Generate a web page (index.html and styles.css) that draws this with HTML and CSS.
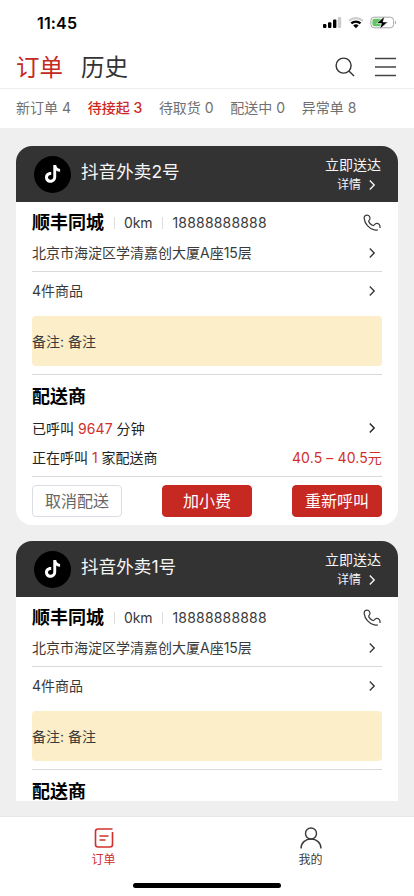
FILE: index.html
```html
<!DOCTYPE html>
<html lang="zh-CN">
<head>
<meta charset="utf-8">
<meta name="viewport" content="width=device-width, initial-scale=1">
<title>订单</title>
<link rel="stylesheet" href="styles.css">
</head>
<body>
<svg class="defs" aria-hidden="true">
  <symbol id="chevron" viewBox="0 0 8 12"><path d="M1.8 1.6 6.2 6 1.8 10.4" fill="none" stroke="currentColor" stroke-width="1.4"/></symbol>
  <symbol id="phone" viewBox="0 0 18 18"><path d="M1.2 4.6C1 2.2 2.3 1 4.2 1c1.9 0 2.9 2.1 2.8 3.8C6.900 6 5.600 6.200 5.700 7.200c.2 1.400 2.400 4 4.400 4.300 1.400.2 1.500-1.900 3.500-2.100 2.100-.1 3.500 1.400 3.400 3.400v1.300M1.200 4.600c.6 4.900 4.600 10.200 10.100 11.300 1 .2 2.300.2 3.500-.1" fill="none" stroke="currentColor" stroke-width="1.25"/></symbol>
  <symbol id="note" viewBox="0 0 24 24"><path fill="#fff" d="M12.300 3h2.900c.2 2.200 1.600 3.700 3.900 3.900v2.900c-1.500 0-2.800-.4-3.900-1.200v6.200c0 3.600-2.500 6-5.700 6S4 18.300 4 15.400c0-3.300 2.600-5.700 6.200-5.400v3c-1.900-.4-3.200.7-3.200 2.300 0 1.500 1.100 2.500 2.600 2.500 1.700 0 2.700-1.100 2.700-3z"/></symbol>
</svg>
<div class="status">
  <span class="time">11:45</span>
  <svg class="signals" viewBox="0 0 76 14">
    <g><rect x="1" y="8" width="3.400" height="4" rx="1"/><rect x="6" y="6.300" width="3.400" height="5.700" rx="1"/><rect x="11" y="3.500" width="3.400" height="8.500" rx="1"/><rect x="15.800" y="1" width="3.400" height="11" rx="1" fill="#ccc"/></g>
    <path d="M27 4.700a10.300 10.300 0 0 1 13.800 0" fill="none" stroke="#ccc" stroke-width="2.200"/>
    <path d="M29.300 7.400a6.700 6.700 0 0 1 9.200 0" fill="none" stroke="#000" stroke-width="2.200"/>
    <path d="M31.200 9.500a4 4 0 0 1 5.400 0L33.900 12.200z"/>
    <rect x="48.900" y="1.200" width="22.700" height="10.600" rx="3.300" fill="#fff" stroke="#a6a6a6"/>
    <path d="M52.400 2.700h6.300v7.600h-6.300a2 2 0 0 1-2-2V4.700a2 2 0 0 1 2-2z" fill="#62c466"/>
    <path d="M73 4.700v3.600c1.400-.5 1.400-3.100 0-3.600z" fill="#a6a6a6"/>
    <path d="M62.800 0 54.600 7.500h4.800L57.700 13.300 65.800 5.900H61z" stroke="#fff" stroke-width=".6"/>
  </svg>
</div>
<header class="top">
  <h1 class="top-tab active">订单</h1><h2 class="top-tab">历史</h2>
  <svg class="search" viewBox="0 0 20 20"><circle cx="8.600" cy="8.600" r="7.500"/><path d="m13.900 13.900 5.100 5"/></svg>
  <svg class="menu" viewBox="0 0 21 20"><path d="M0 1.500h21M0 10h21M0 18.500h21"/></svg>
</header>
<nav class="filters">
  <span>新订单 4</span><span class="active">待接起 3</span><span>待取货 0</span><span>配送中 0</span><span>异常单 8</span>
</nav>
<main class="list">
  <article class="card">
    <div class="card-head">
      <div class="logo"><svg><use href="#note"/></svg></div>
      <div class="store">抖音外卖2号</div>
      <div class="deliver"><span>立即送达</span><span class="detail">详情<svg class="chev"><use href="#chevron"/></svg></span></div>
    </div>
    <div class="card-body">
      <div class="row contact"><strong>顺丰同城</strong><i class="sep"></i><span class="km">0km</span><i class="sep"></i><span class="tel">18888888888</span><svg class="phone"><use href="#phone"/></svg></div>
      <div class="row address"><span>北京市海淀区学清嘉创大厦A座15层</span><svg class="chev"><use href="#chevron"/></svg></div>
      <div class="row goods"><span>4件商品</span><svg class="chev"><use href="#chevron"/></svg></div>
      <div class="remark">备注: 备注</div>
      <h3 class="section">配送商</h3>
      <div class="row called"><span>已呼叫 <em>9647</em> 分钟</span><svg class="chev"><use href="#chevron"/></svg></div>
      <div class="row calling"><span>正在呼叫 <em>1</em> 家配送商</span><em class="price">40.5 – 40.5元</em></div>
      <div class="actions"><button class="btn plain">取消配送</button><button class="btn">加小费</button><button class="btn">重新呼叫</button></div>
    </div>
  </article>
  <article class="card">
    <div class="card-head">
      <div class="logo"><svg><use href="#note"/></svg></div>
      <div class="store">抖音外卖1号</div>
      <div class="deliver"><span>立即送达</span><span class="detail">详情<svg class="chev"><use href="#chevron"/></svg></span></div>
    </div>
    <div class="card-body">
      <div class="row contact"><strong>顺丰同城</strong><i class="sep"></i><span class="km">0km</span><i class="sep"></i><span class="tel">18888888888</span><svg class="phone"><use href="#phone"/></svg></div>
      <div class="row address"><span>北京市海淀区学清嘉创大厦A座15层</span><svg class="chev"><use href="#chevron"/></svg></div>
      <div class="row goods"><span>4件商品</span><svg class="chev"><use href="#chevron"/></svg></div>
      <div class="remark">备注: 备注</div>
      <h3 class="section">配送商</h3>
    </div>
  </article>
</main>
<footer class="tabbar">
  <div class="tabs">
    <div class="tab active"><svg viewBox="0 0 22 22"><path d="M19.500 2H5Q2.500 2 2.500 4.500v13Q2.500 20 5 20h12q2.500 0 2.500-2.500V5M6.500 9h9M6.500 13h6" fill="none" stroke="currentColor" stroke-width="1.600"/></svg><span>订单</span></div>
    <div class="tab"><svg viewBox="0 0 22 22"><circle cx="11" cy="6.500" r="5.500" fill="none" stroke="currentColor" stroke-width="1.400"/><path d="M1 21.500C1 15.800 5.500 12 11 12s10 3.800 10 9.500" fill="none" stroke="currentColor" stroke-width="1.400"/></svg><span>我的</span></div>
  </div>
  <div class="home"></div>
</footer>
</body>
</html>
```
FILE: styles.css
```css
* { box-sizing: border-box; }
body {
  margin: 0; height: 896px; overflow: hidden;
  display: flex; flex-direction: column;
  background: #efefef; color: #3a3a3a;
  font: 14px/20px Inter, "Noto Sans CJK SC", sans-serif;
}
h1, h2, h3 { margin: 0; }
em { font-style: normal; color: #d0302c; }
svg { display: block; flex: none; }
.defs { position: absolute; width: 0; height: 0; }

.status { height: 47px; flex: none; background: #fff; display: flex; align-items: center; padding: 0 16px 1px 37px; }
.time { font-weight: 600; font-size: 16px; letter-spacing: .15px; color: #000; }
.signals { width: 76px; height: 14px; margin-left: auto; }

.top { height: 42px; flex: none; background: #fff; display: flex; align-items: center; padding: 0 18px 3px 16px; border-bottom: 1px solid #eee; }
.top-tab { font-size: 23.5px; line-height: 34px; font-weight: 400; margin: 3px 18px 0 0; color: #333; }
.top-tab.active { color: #c62822; }
.search { width: 20px; height: 20px; margin: 1px 0 0 auto; fill: none; stroke: #333; stroke-width: 1.4; }
.menu { width: 21px; height: 20px; margin: 1px 0 0 20px; fill: none; stroke: #444; stroke-width: 1.4; }

.filters { height: 39px; flex: none; background: #fff; display: flex; align-items: center; gap: 16.7px; padding: 0 16px 1px; color: #707070; white-space: nowrap; }
.filters .active { color: #cc2924; font-weight: 500; }

.list { height: 673px; flex: none; overflow: hidden; padding: 18px 16px 0; }
.card { background: #fff; border-radius: 16px; overflow: hidden; margin-bottom: 16px; }
.card-head { height: 56px; background: #333; color: #f5f5f5; display: flex; align-items: center; padding: 0 17px 0 18px; }
.logo { width: 37px; height: 37px; border-radius: 50%; background: #000; display: flex; align-items: center; justify-content: center; }
.logo svg { width: 24px; height: 24px; }
.store { font-size: 17.6px; line-height: 24px; font-weight: 400; margin: 0 auto 4px 10px; }
.deliver { display: flex; flex-direction: column; align-items: flex-end; line-height: 20px; padding-top: 1px; }
.detail { display: flex; align-items: center; font-size: 12px; line-height: 19px; gap: 7px; padding-right: 5px; }
.chev { width: 8px; height: 12px; }

.card-body { padding: 0 16px 8px; }
.row { display: flex; align-items: center; justify-content: space-between; white-space: nowrap; }
.row .chev { margin-right: 6px; }
.contact { height: 40px; justify-content: flex-start; padding-top: 1px; }
.contact strong { font-size: 18px; line-height: 26px; font-weight: 700; color: #000; }
.tel { letter-spacing: .18px; }
.km { letter-spacing: -.1px; }
.sep { width: 1px; height: 12px; background: #ddd; margin: 0 9.5px; }
.phone { width: 18px; height: 18px; margin: 0 1px 0 auto; }
.address { height: 30px; padding-bottom: 7px; border-bottom: 1px solid #d9d9d9; }
.goods { height: 37px; }
.remark { height: 50px; margin: 7px 0 8px; border-radius: 4px; background: #fbeec8; display: flex; align-items: center; padding-top: 1px; }
.section { height: 43px; border-top: 1px solid #d9d9d9; font-size: 18px; line-height: 44px; color: #000; }
.called { height: 22px; color: #222; }
.called span { padding-top: 1px; letter-spacing: .04px; }
.calling { height: 38px; border-bottom: 1px solid #d9d9d9; color: #222; padding-top: 1px; }
.price { letter-spacing: .12px; }
.actions { display: flex; justify-content: space-between; margin-top: 8px; }
.btn { width: 90px; height: 32px; padding: 0; border: 1px solid #c62822; border-radius: 4px; background: #c62822; color: #fff; font: 16px/30px Inter, "Noto Sans CJK SC", sans-serif; }
.btn.plain { background: #fff; color: #666; border-color: #dcdce4; }

.tabbar { flex: none; height: 80px; margin-top: 15px; background: #fff; border-top: 1px solid #e6e6e6; }
.tabs { display: flex; height: 66px; padding-top: 10px; }
.tab { flex: 1; display: flex; flex-direction: column; align-items: center; font-size: 12px; line-height: 20px; }
.tab svg { width: 22px; height: 22px; margin-bottom: 1px; }
.tab.active { color: #d0302c; }
.home { width: 148px; height: 5px; border-radius: 3px; background: #000; margin: 0 auto; }
```
